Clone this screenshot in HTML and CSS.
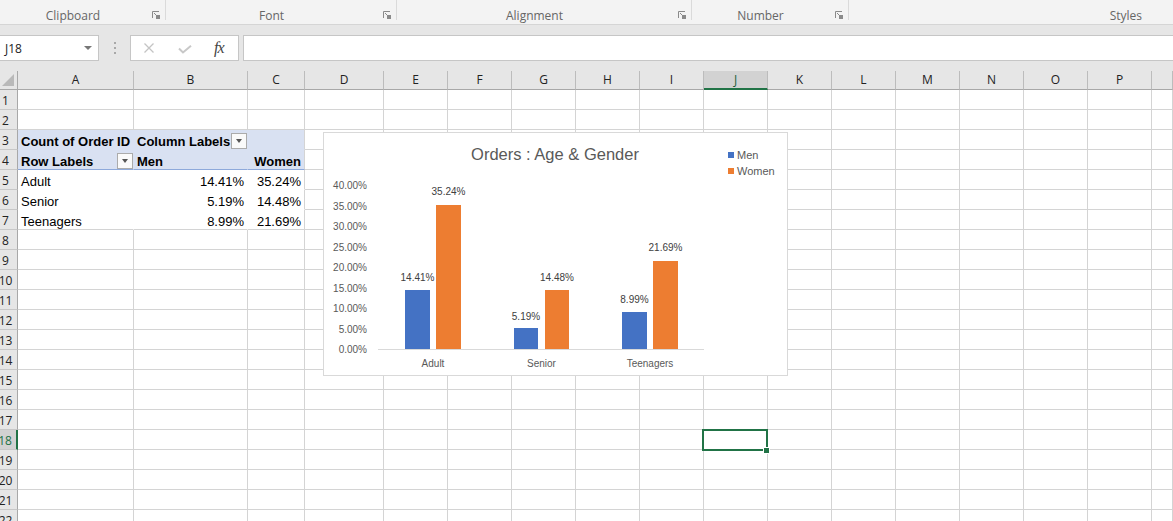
FILE: index.html
```html
<!DOCTYPE html>
<html lang="en">
<head>
<meta charset="utf-8">
<title>Orders : Age &amp; Gender</title>
<link rel="stylesheet" href="styles.css">
</head>
<body>
<div class="ribbon">
  <div class="grp g-clip"><span class="lbl">Clipboard</span><svg class="dl" width="8" height="8" viewBox="0 0 8 8"><path d="M0.5 7V0.5H7" fill="none" stroke="#8a8a8a"/><path d="M2 2L5.5 5.5" stroke="#8a8a8a"/><rect x="4" y="4" width="4" height="4" fill="#8a8a8a"/></svg></div>
  <div class="grp g-font"><span class="lbl">Font</span><svg class="dl" width="8" height="8" viewBox="0 0 8 8"><path d="M0.5 7V0.5H7" fill="none" stroke="#8a8a8a"/><path d="M2 2L5.5 5.5" stroke="#8a8a8a"/><rect x="4" y="4" width="4" height="4" fill="#8a8a8a"/></svg></div>
  <div class="grp g-align"><span class="lbl">Alignment</span><svg class="dl" width="8" height="8" viewBox="0 0 8 8"><path d="M0.5 7V0.5H7" fill="none" stroke="#8a8a8a"/><path d="M2 2L5.5 5.5" stroke="#8a8a8a"/><rect x="4" y="4" width="4" height="4" fill="#8a8a8a"/></svg></div>
  <div class="grp g-num"><span class="lbl">Number</span><svg class="dl" width="8" height="8" viewBox="0 0 8 8"><path d="M0.5 7V0.5H7" fill="none" stroke="#8a8a8a"/><path d="M2 2L5.5 5.5" stroke="#8a8a8a"/><rect x="4" y="4" width="4" height="4" fill="#8a8a8a"/></svg></div>
  <div class="grp g-styles"><span class="lbl">Styles</span></div>
</div>

<div class="fzone">
  <div class="namebox"><span>J18</span><span class="tri"></span></div>
  <div class="dots"><i></i><i></i><i></i></div>
  <div class="fxbox">
    <svg class="ic-x" width="12" height="10" viewBox="0 0 12 10"><path d="M1.5 0.5L10.5 9.5M10.5 0.5L1.5 9.5" stroke="#c4c4c4" stroke-width="1.3" fill="none"/></svg>
    <svg class="ic-ok" width="14" height="9" viewBox="0 0 14 9"><path d="M1 3.5L5 7.5L13 0.8" stroke="#c8c8c8" stroke-width="2" fill="none"/></svg>
    <span class="fx">fx</span>
  </div>
  <div class="finput"></div>
</div>

<div class="g">
  <div class="corner"></div>
  <div class="ch">A</div><div class="ch">B</div><div class="ch">C</div><div class="ch">D</div><div class="ch">E</div><div class="ch">F</div><div class="ch">G</div><div class="ch">H</div><div class="ch">I</div><div class="ch hs">J</div><div class="ch">K</div><div class="ch">L</div><div class="ch">M</div><div class="ch">N</div><div class="ch">O</div><div class="ch">P</div><div class="ch"></div>

  <div class="rh">1</div><i></i><i></i><i></i><i></i><i></i><i></i><i></i><i></i><i></i><i></i><i></i><i></i><i></i><i></i><i></i><i></i><i></i>
  <div class="rh">2</div><i></i><i></i><i></i><i></i><i></i><i></i><i></i><i></i><i></i><i></i><i></i><i></i><i></i><i></i><i></i><i></i><i></i>

  <div class="rh">3</div>
  <div class="c ph b">Count of Order ID</div>
  <div class="c ph b fl">Column Labels<span class="dd"></span></div>
  <div class="c ph end"></div>
  <i></i><i></i><i></i><i></i><i></i><i></i><i></i><i></i><i></i><i></i><i></i><i></i><i></i><i></i>

  <div class="rh">4</div>
  <div class="c ph pb b fl">Row Labels<span class="dd"></span></div>
  <div class="c ph pb b">Men</div>
  <div class="c ph pb b r end">Women</div>
  <i></i><i></i><i></i><i></i><i></i><i></i><i></i><i></i><i></i><i></i><i></i><i></i><i></i><i></i>

  <div class="rh">5</div>
  <div class="c pv">Adult</div>
  <div class="c pv r">14.41%</div>
  <div class="c pv r end">35.24%</div>
  <i></i><i></i><i></i><i></i><i></i><i></i><i></i><i></i><i></i><i></i><i></i><i></i><i></i><i></i>

  <div class="rh">6</div>
  <div class="c pv">Senior</div>
  <div class="c pv r">5.19%</div>
  <div class="c pv r end">14.48%</div>
  <i></i><i></i><i></i><i></i><i></i><i></i><i></i><i></i><i></i><i></i><i></i><i></i><i></i><i></i>

  <div class="rh">7</div>
  <div class="c pv last">Teenagers</div>
  <div class="c pv last r">8.99%</div>
  <div class="c pv last r end">21.69%</div>
  <i></i><i></i><i></i><i></i><i></i><i></i><i></i><i></i><i></i><i></i><i></i><i></i><i></i><i></i>

  <div class="rh">8</div><i></i><i></i><i></i><i></i><i></i><i></i><i></i><i></i><i></i><i></i><i></i><i></i><i></i><i></i><i></i><i></i><i></i>
  <div class="rh">9</div><i></i><i></i><i></i><i></i><i></i><i></i><i></i><i></i><i></i><i></i><i></i><i></i><i></i><i></i><i></i><i></i><i></i>
  <div class="rh">10</div><i></i><i></i><i></i><i></i><i></i><i></i><i></i><i></i><i></i><i></i><i></i><i></i><i></i><i></i><i></i><i></i><i></i>
  <div class="rh">11</div><i></i><i></i><i></i><i></i><i></i><i></i><i></i><i></i><i></i><i></i><i></i><i></i><i></i><i></i><i></i><i></i><i></i>
  <div class="rh">12</div><i></i><i></i><i></i><i></i><i></i><i></i><i></i><i></i><i></i><i></i><i></i><i></i><i></i><i></i><i></i><i></i><i></i>
  <div class="rh">13</div><i></i><i></i><i></i><i></i><i></i><i></i><i></i><i></i><i></i><i></i><i></i><i></i><i></i><i></i><i></i><i></i><i></i>
  <div class="rh">14</div><i></i><i></i><i></i><i></i><i></i><i></i><i></i><i></i><i></i><i></i><i></i><i></i><i></i><i></i><i></i><i></i><i></i>
  <div class="rh">15</div><i></i><i></i><i></i><i></i><i></i><i></i><i></i><i></i><i></i><i></i><i></i><i></i><i></i><i></i><i></i><i></i><i></i>
  <div class="rh">16</div><i></i><i></i><i></i><i></i><i></i><i></i><i></i><i></i><i></i><i></i><i></i><i></i><i></i><i></i><i></i><i></i><i></i>
  <div class="rh">17</div><i></i><i></i><i></i><i></i><i></i><i></i><i></i><i></i><i></i><i></i><i></i><i></i><i></i><i></i><i></i><i></i><i></i>
  <div class="rh rs">18</div><i></i><i></i><i></i><i></i><i></i><i></i><i></i><i></i><i></i><i class="sel"></i><i></i><i></i><i></i><i></i><i></i><i></i><i></i>
  <div class="rh">19</div><i></i><i></i><i></i><i></i><i></i><i></i><i></i><i></i><i></i><i></i><i></i><i></i><i></i><i></i><i></i><i></i><i></i>
  <div class="rh">20</div><i></i><i></i><i></i><i></i><i></i><i></i><i></i><i></i><i></i><i></i><i></i><i></i><i></i><i></i><i></i><i></i><i></i>
  <div class="rh">21</div><i></i><i></i><i></i><i></i><i></i><i></i><i></i><i></i><i></i><i></i><i></i><i></i><i></i><i></i><i></i><i></i><i></i>
  <div class="rh">22</div><i></i><i></i><i></i><i></i><i></i><i></i><i></i><i></i><i></i><i></i><i></i><i></i><i></i><i></i><i></i><i></i><i></i>
</div>

<div class="chart">
  <svg width="465" height="244" viewBox="0 0 465 244" font-family="Liberation Sans, Arial, sans-serif">
    <rect x="0.5" y="0.5" width="464" height="243" fill="#fff" stroke="#d9d9d9"/>
    <text x="232" y="28" text-anchor="middle" font-size="16.5" fill="#595959">Orders : Age &amp; Gender</text>
    <rect x="405" y="20" width="6" height="6" fill="#4472c4"/>
    <text x="414" y="26.5" font-size="11" fill="#595959">Men</text>
    <rect x="405" y="36" width="6" height="6" fill="#ed7d31"/>
    <text x="414" y="42.5" font-size="11" fill="#595959">Women</text>
    <g font-size="10" fill="#595959" text-anchor="end">
      <text x="44" y="221">0.00%</text>
      <text x="44" y="200.5">5.00%</text>
      <text x="44" y="180">10.00%</text>
      <text x="44" y="159.5">15.00%</text>
      <text x="44" y="139">20.00%</text>
      <text x="44" y="118.5">25.00%</text>
      <text x="44" y="98">30.00%</text>
      <text x="44" y="77.5">35.00%</text>
      <text x="44" y="57">40.00%</text>
    </g>
    <rect x="82" y="158" width="25" height="59" fill="#4472c4"/>
    <rect x="113" y="73" width="25" height="144" fill="#ed7d31"/>
    <rect x="191" y="196" width="24" height="21" fill="#4472c4"/>
    <rect x="222" y="158" width="24" height="59" fill="#ed7d31"/>
    <rect x="299" y="180" width="25" height="37" fill="#4472c4"/>
    <rect x="330" y="129" width="25" height="88" fill="#ed7d31"/>
    <line x1="55" y1="217.5" x2="381" y2="217.5" stroke="#d9d9d9"/>
    <g font-size="10" fill="#404040" text-anchor="middle">
      <text x="94.5" y="149">14.41%</text>
      <text x="125.5" y="62.5">35.24%</text>
      <text x="203" y="187.5">5.19%</text>
      <text x="234" y="149">14.48%</text>
      <text x="311.5" y="171">8.99%</text>
      <text x="342.5" y="119">21.69%</text>
    </g>
    <g font-size="10" fill="#595959" text-anchor="middle">
      <text x="110" y="235">Adult</text>
      <text x="218.5" y="235">Senior</text>
      <text x="327" y="235">Teenagers</text>
    </g>
  </svg>
</div>
</body>
</html>
```

FILE: styles.css
```css
html, body {
  margin: 0;
  padding: 0;
}
body {
  width: 1173px;
  height: 521px;
  overflow: hidden;
  background: #fff;
  font-family: "Open Sans", "Liberation Sans", sans-serif;
}

/* ribbon group labels */
.ribbon {
  display: flex;
  height: 25px;
  box-sizing: border-box;
  background: #f3f3f3;
  border-bottom: 1px solid #d5d5d5;
  font-size: 12px;
  color: #666;
}
.grp {
  display: flex;
  align-items: flex-end;
  height: 24px;
  box-sizing: border-box;
  padding-bottom: 0;
  background: linear-gradient(#dadada, #dadada) right top / 1px 20px no-repeat;
}
.lbl {
  flex: 1;
  text-align: center;
  line-height: 16px;
  white-space: nowrap;
}
.dl {
  align-self: flex-start;
  margin: 11px 6px 0 6px;
}
.g-clip { width: 166px; }
.g-font { width: 231px; }
.g-align { width: 295px; }
.g-num { width: 157px; }
.g-styles {
  flex: 1;
  background: none;
}
.g-styles .lbl {
  text-align: right;
  padding-right: 31px;
}

/* formula bar */
.fzone {
  display: flex;
  height: 26px;
  padding: 10px 0;
  background: #e6e6e6;
}
.namebox {
  width: 99px;
  box-sizing: border-box;
  border: 1px solid #c6c6c6;
  border-left: none;
  background: #fff;
  display: flex;
  align-items: center;
  justify-content: space-between;
  padding: 0 6px 0 5px;
  font-size: 12px;
  color: #222;
}
.tri {
  width: 0;
  height: 0;
  border-left: 4px solid transparent;
  border-right: 4px solid transparent;
  border-top: 4px solid #777;
}
.dots {
  width: 31px;
  display: flex;
  flex-direction: column;
  align-items: center;
  justify-content: center;
  gap: 3px;
}
.dots i {
  display: block;
  width: 2px;
  height: 2px;
  background: #a8a8a8;
}
.fxbox {
  width: 109px;
  box-sizing: border-box;
  border: 1px solid #c6c6c6;
  background: #fff;
  display: flex;
  align-items: center;
}
.ic-x { margin-left: 12px; }
.ic-ok { margin-left: 23px; margin-top: 2px; }
.fx {
  margin-left: 22px;
  font-family: "Liberation Serif", serif;
  font-style: italic;
  font-size: 16px;
  color: #444;
  letter-spacing: -1px;
}
.finput {
  flex: 1;
  margin-left: 4px;
  border: 1px solid #c6c6c6;
  border-right: none;
  background: #fff;
}

/* sheet grid */
.g {
  display: grid;
  grid-template-columns: 18px 116px 114px 57px 79px repeat(12, 64px) 21px;
  grid-template-rows: 19px;
  grid-auto-rows: 20px;
}
.g > * {
  box-sizing: border-box;
}
.g i {
  display: block;
  border-right: 1px solid #d4d4d4;
  border-bottom: 1px solid #d4d4d4;
}
.corner {
  position: relative;
  background: #e6e6e6;
  border-right: 1px solid #a8a8a8;
  border-bottom: 1px solid #a8a8a8;
}
.corner::after {
  content: "";
  position: absolute;
  right: 3px;
  bottom: 3px;
  width: 0;
  height: 0;
  border-left: 12px solid transparent;
  border-bottom: 12px solid #b9b9b9;
}
.ch {
  background: #e6e6e6;
  border-right: 1px solid #bcbcbc;
  border-bottom: 1px solid #a8a8a8;
  text-align: center;
  font-size: 12px;
  line-height: 18px;
  color: #222;
}
.ch.hs {
  background: #d2d2d2;
  border-bottom: 2px solid #217346;
  color: #1f5e3a;
  line-height: 17px;
}
.rh {
  display: flex;
  align-items: flex-end;
  justify-content: center;
  padding-right: 6px;
  background: #e6e6e6;
  border-right: 1px solid #a8a8a8;
  border-bottom: 1px solid #c8c8c8;
  font-size: 12px;
  line-height: 16px;
  color: #222;
  white-space: nowrap;
}
.rh.rs {
  background: #d2d2d2;
  color: #217346;
  border-right: 2px solid #217346;
}

/* cells with content */
.c {
  display: flex;
  align-items: flex-end;
  padding: 0 3px;
  border-right: 1px solid #d4d4d4;
  border-bottom: 1px solid #d4d4d4;
  font-family: "Liberation Sans", Arial, sans-serif;
  font-size: 13px;
  line-height: 15px;
  color: #000;
  white-space: nowrap;
  overflow: visible;
}
.b { font-weight: bold; }
.r { justify-content: flex-end; }
.fl {
  justify-content: space-between;
  padding-right: 0;
}
.ph {
  background: #d9e1f2;
  border-right-color: #d9e1f2;
  border-bottom-color: #d9e1f2;
}
.pb { border-bottom-color: #8ea9db; }
.pv {
  border-right-color: #fff;
  border-bottom-color: #fff;
}
.last { border-bottom-color: #d4d4d4; }
.end { border-right-color: #d4d4d4; }
.dd {
  display: flex;
  align-items: center;
  justify-content: center;
  width: 16px;
  height: 16px;
  box-sizing: border-box;
  border: 1px solid #ababab;
  background: #fafafa;
}
.dd::after {
  content: "";
  width: 0;
  height: 0;
  border-left: 3.5px solid transparent;
  border-right: 3.5px solid transparent;
  border-top: 4px solid #555;
}

/* selected cell J18 */
.g i.sel {
  position: relative;
}
.sel::after {
  content: "";
  position: absolute;
  left: -2px;
  top: -1px;
  right: -1px;
  bottom: -2px;
  border: 2px solid #217346;
}
.sel::before {
  content: "";
  position: absolute;
  right: -2px;
  bottom: -4px;
  width: 5px;
  height: 5px;
  background: #217346;
  box-shadow: 0 0 0 1px #fff;
  z-index: 2;
}

/* floating chart */
.chart {
  position: absolute;
  left: 323px;
  top: 132px;
  width: 465px;
  height: 244px;
  z-index: 3;
}
.chart svg {
  display: block;
}
```
